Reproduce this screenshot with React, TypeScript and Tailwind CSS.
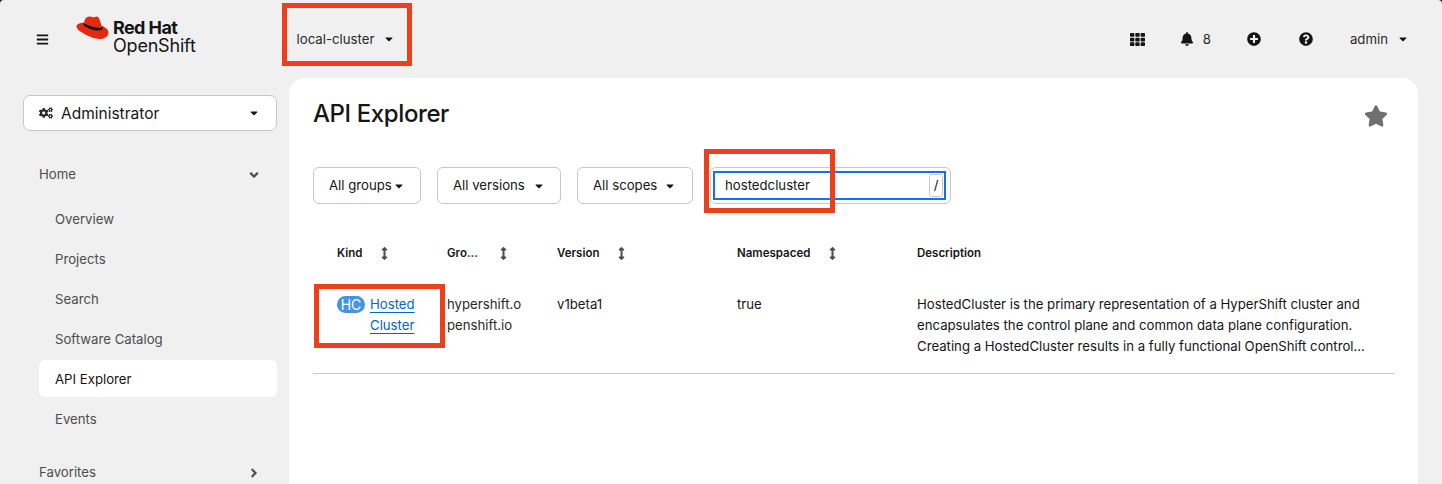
import { FaArrowsAltV, FaBars, FaBell, FaCaretDown, FaCogs, FaPlusCircle, FaQuestionCircle, FaStar, FaTh, FaAngleDown, FaAngleRight } from 'react-icons/fa'

const NAV = ['Overview', 'Projects', 'Search', 'Software Catalog', 'API Explorer', 'Events']
const FILTERS = [
  { label: 'All groups', width: 'w-[108px]', gap: 'gap-[1px]' },
  { label: 'All versions', width: 'w-[124px]', gap: 'gap-[8px]' },
  { label: 'All scopes', width: 'w-[116px]', gap: 'gap-[7px]' },
]
const COLUMNS = [
  { label: 'Kind', icon: 'ml-[16px]' },
  { label: 'Gro...', icon: 'ml-[19px]' },
  { label: 'Version', icon: 'ml-[16px]' },
  { label: 'Namespaced', icon: 'ml-[16px]' },
  { label: 'Description', icon: '' },
]

function RedHatLogo() {
  return (
    <svg width="34" height="26" viewBox="0 0 34 26" className="shrink-0">
      <path
        d="M9 3.500C10 1.200 12.500 0 14.500.6c1.700.5 3 .9 4.300.4 1.200-.5 2.700-.8 3.700.4 1 1.200 1.800 4 2.500 6.600.3 1.200.6 1.800 1.200 2.100 3 1.400 6.300 3.400 6.300 6.300 0 3-3.100 6.600-8.800 6.600-6.300 0-13-3.500-18-6.700C3.100 14.900.500 12.500.500 10.700c0-2.800 3.700-3.800 6.600-3.900.8-.1 1.100-.6 1.200-1.200z"
        fill="#e5290f"
      />
      <path
        d="M7.200 7.100c-.5 1.600 1.700 3.800 5.800 5.400 4.500 1.800 10.300 2.800 12.700 1.300 1.200-.8 1.300-1.900.9-3.500-.1 1.300-1.900 1.900-5 1.500-4.900-.6-11.800-3-14.400-4.700z"
        fill="#151515"
      />
    </svg>
  )
}

function Annotation({ className }: { className: string }) {
  return <div className={`absolute border-[5px] border-[#ee3f1c] ${className}`} />
}

export default function App() {
  return (
    <div className="h-[484px] w-[1442px] bg-[#1a1a1a]">
      <div className="relative h-[484px] w-[1442px] overflow-hidden rounded-t-[4px] bg-[#f0f0f0] font-['Inter',sans-serif] text-[13.2px] text-[#151515]">
        {/* Masthead */}
        <header className="flex h-[78px] items-center pt-[1px]">
          <FaBars className="ml-[36px] text-[13px]" />
          <div className="ml-[27px] mb-[9px] flex items-start gap-[3px]">
            <RedHatLogo />
            <div className="mt-[3px] leading-[18px]">
              <div className="text-[18px] font-bold tracking-[-0.6px]">Red Hat</div>
              <div className="text-[18px] tracking-[-0.2px]">OpenShift</div>
            </div>
          </div>
          <div className="ml-[101px] flex items-center gap-[9px] text-[#292929]">
            <span>local-cluster</span>
            <FaCaretDown className="text-[12px] text-[#151515]" />
          </div>
          <div className="ml-auto mr-[33px] flex items-center">
            <FaTh className="text-[15px]" />
            <FaBell className="ml-[35px] text-[14px]" />
            <span className="ml-[9px] text-[#292929]">8</span>
            <FaPlusCircle className="ml-[36px] text-[14px]" />
            <FaQuestionCircle className="ml-[38px] text-[14px]" />
            <span className="ml-[37px] text-[#292929]">admin</span>
            <FaCaretDown className="ml-[9px] text-[12px]" />
          </div>
        </header>

        <div className="flex h-[406px]">
          {/* Sidebar */}
          <aside className="w-[289px] shrink-0 pl-[23px] pr-[12px] pt-[17px]">
            <div className="flex h-[36px] items-center rounded-[7px] border border-[#c7c7c7] bg-white pl-[15px] pr-[16px]">
              <FaCogs className="text-[14px] text-[#292929]" />
              <span className="ml-[8px] pt-[1px] text-[15.5px]">Administrator</span>
              <FaCaretDown className="ml-auto text-[12px]" />
            </div>
            <div className="ml-[16px] mt-[34px] flex items-center justify-between pr-[16px] text-[#4d4d4d]">
              <span>Home</span>
              <FaAngleDown className="text-[14px] text-[#4d4d4d]" />
            </div>
            <nav className="ml-[16px] mt-[15px] flex flex-col gap-[3px] text-[#4d4d4d]">
              {NAV.map(item => (
                <div
                  key={item}
                  className={`flex h-[37px] items-center rounded-[6px] pl-[16px] pt-[4px] ${item === 'API Explorer' ? 'bg-white text-[#151515]' : ''}`}
                >
                  {item}
                </div>
              ))}
            </nav>
            <div className="ml-[16px] mt-[26px] flex items-center justify-between pr-[16px] text-[#4d4d4d]">
              <span>Favorites</span>
              <FaAngleRight className="text-[14px] text-[#4d4d4d]" />
            </div>
          </aside>

          {/* Page */}
          <main className="w-[1129px] shrink-0 rounded-t-[16px] bg-white px-[24px]">
            <div className="flex items-center justify-between pt-[19px]">
              <h1 className="text-[24px] font-medium leading-[34px] tracking-[-0.4px]">API Explorer</h1>
              <FaStar className="mt-[4px] mr-[6px] text-[24px] text-[#707070]" />
            </div>

            <div className="mt-[36px] flex items-center">
              {FILTERS.map(f => (
                <div
                  key={f.label}
                  className={`mr-[16px] flex h-[37px] items-center rounded-[6px] border border-[#c7c7c7] pl-[15px] text-[#151515] ${f.width} ${f.gap}`}
                >
                  <span>{f.label}</span>
                  <FaCaretDown className="text-[12px]" />
                </div>
              ))}
              <div className="ml-[1px] flex h-[37px] w-[241px] items-center rounded-[6px] border border-[#c7c7c7] px-[2px]">
                <div className="flex h-[29px] w-[233px] items-center justify-between border-2 border-[#1570ef] pl-[10px] pr-[1px]">
                  <span>hostedcluster</span>
                  <span className="flex h-[23px] w-[14px] items-center justify-center rounded-[3px] border border-[#c7c7c7] text-[13px]">/</span>
                </div>
              </div>
            </div>

            {/* Table */}
            <div className="mt-[39px] grid grid-cols-[110px_110px_180px_180px_1fr] pl-[24px] text-[11.5px] font-semibold leading-[20px]">
              {COLUMNS.map(c => (
                <div key={c.label} className="flex items-center">
                  <span>{c.label}</span>
                  {c.label !== 'Description' && <FaArrowsAltV className={`text-[13px] text-[#4d4d4d] ${c.icon}`} />}
                </div>
              ))}
            </div>
            <div className="mt-[31px] grid grid-cols-[110px_110px_180px_180px_1fr] border-b border-[#c7c7c7] pb-[16px] pl-[24px] leading-[21px]">
              <div className="flex items-start">
                <span className="mt-[2px] flex h-[17px] w-[28px] shrink-0 items-center justify-center rounded-full bg-[#4394e5] text-[14px] text-white">HC</span>
                <a className="ml-[5px] text-[#0066cc] underline underline-offset-[3px]">Hosted Cluster</a>
              </div>
              <div className="break-all pr-[32px] text-[#292929]">hypershift.openshift.io</div>
              <div>v1beta1</div>
              <div>true</div>
              <div className="pr-[20px]">
                HostedCluster is the primary representation of a HyperShift cluster and encapsulates the control plane and common data plane configuration. Creating a HostedCluster results in a fully functional OpenShift control...
              </div>
            </div>
          </main>
        </div>

        {/* Review callouts drawn over the screenshot */}
        <Annotation className="left-[282px] top-[3px] h-[63px] w-[130px]" />
        <Annotation className="left-[704px] top-[149px] h-[64px] w-[131px]" />
        <Annotation className="left-[314px] top-[284px] h-[64px] w-[131px]" />
      </div>
    </div>
  )
}
